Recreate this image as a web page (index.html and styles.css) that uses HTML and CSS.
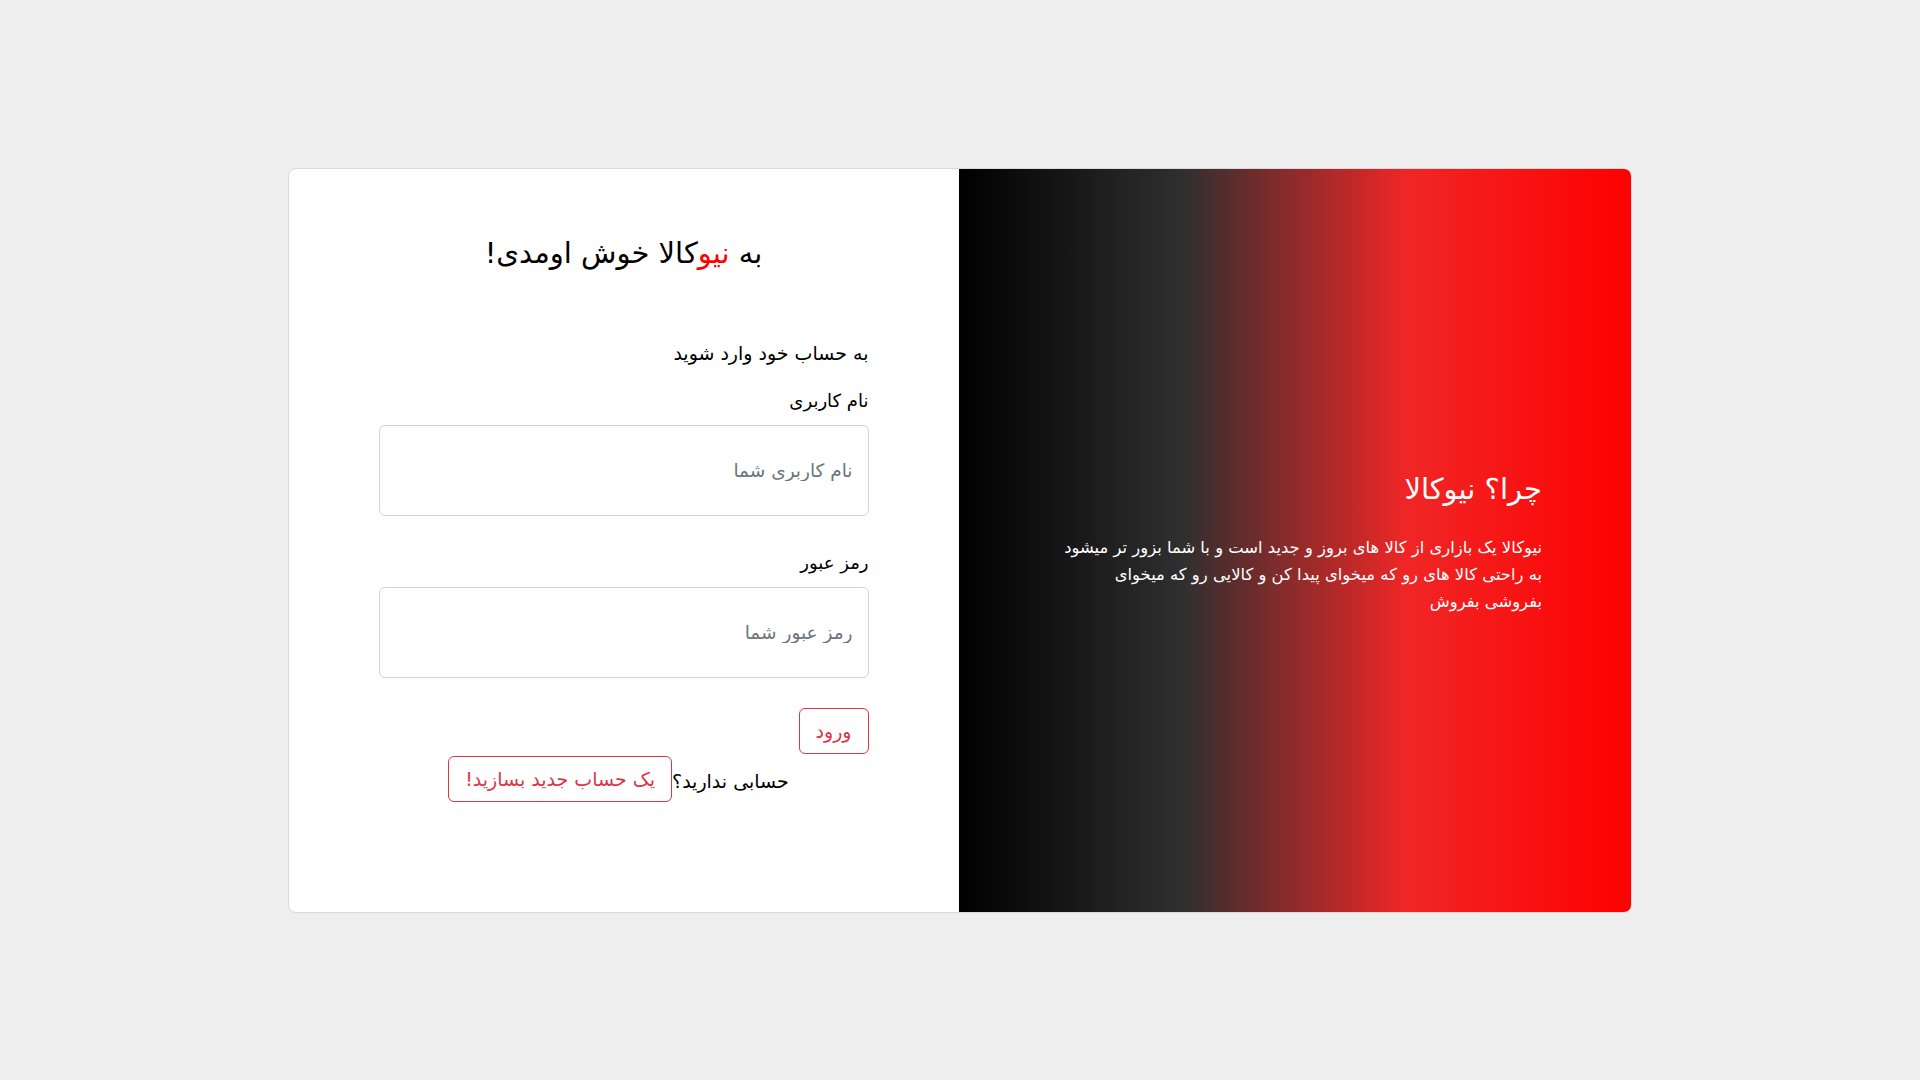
FILE: index.html
```html
<!DOCTYPE html>
<html lang="fa" dir="rtl">
<head>
<meta charset="utf-8">
<title>ورود - نیوکالا</title>
<link rel="stylesheet" href="styles.css">
</head>
<body>
<main class="page">
  <section class="card">
    <div class="promo">
      <div class="promo-text">
        <h3 class="promo-title">چرا؟ نیوکالا</h3>
        <p class="promo-desc">نیوکالا یک بازاری از کالا های بروز و جدید است و با شما بزور تر میشود به راحتی کالا های رو که میخوای پیدا کن و کالایی رو که میخوای بفروشی بفروش</p>
      </div>
    </div>
    <div class="login">
      <h2 class="welcome">به <span class="brand">نیو</span>کالا خوش اومدی!</h2>
      <form class="form">
        <p class="subtitle">به حساب خود وارد شوید</p>
        <label class="label" for="username">نام کاربری</label>
        <input class="input" id="username" type="text" placeholder="نام کاربری شما">
        <label class="label label-gap" for="password">رمز عبور</label>
        <input class="input" id="password" type="password" placeholder="رمز عبور شما">
        <div class="actions">
          <button class="btn" type="button">ورود</button>
        </div>
        <div class="signup">
          <span class="signup-text">حسابی ندارید؟</span><button class="btn" type="button">یک حساب جدید بسازید!</button>
        </div>
      </form>
    </div>
  </section>
</main>
</body>
</html>
```
FILE: styles.css
```css
* { box-sizing: border-box; }
html, body {
  margin: 0;
  padding: 0;
  background: #eeeeee;
  font-family: "DejaVu Sans", "Noto Sans", sans-serif;
  color: #212529;
}
.page {
  width: 1920px;
  height: 1080px;
  display: flex;
  align-items: center;
  justify-content: center;
}
.card {
  width: 1344px;
  height: 745px;
  display: flex;
  flex-direction: row;
  background: #fff;
  border: 1px solid #d9d9d9;
  border-radius: 8px;
  overflow: hidden;
}
.promo {
  flex: 0 0 672px;
  display: flex;
  align-items: center;
  justify-content: flex-start;
  padding: 0 89px 0 0;
  background: linear-gradient(to right, #000 0%, #2f2f2f 33.3%, #f02626 66.7%, #ff0000 100%);
  color: #fff;
}
.promo-text {
  width: 485px;
  padding-top: 6px;
}
.promo-title {
  margin: 0 0 27px 0;
  font-size: 29px;
  font-weight: normal;
  line-height: 35px;
}
.promo-desc {
  margin: 0;
  font-size: 16.4px;
  line-height: 27px;
}
.login {
  flex: 0 0 671px;
  padding-top: 66px;
  display: flex;
  flex-direction: column;
  align-items: center;
}
.welcome {
  margin: 0;
  font-size: 29px;
  line-height: 36px;
  font-weight: normal;
  color: #000;
}
.brand { color: #ff0000; }
.form {
  width: 490px;
  margin-top: 68px;
  display: flex;
  flex-direction: column;
}
.subtitle {
  margin: 0 0 20px 0;
  font-size: 19px;
  line-height: 28px;
  color: #000;
}
.label {
  font-size: 18px;
  line-height: 28px;
  color: #000;
  margin-bottom: 10px;
}
.label-gap { margin-top: 33px; }
.input {
  width: 100%;
  height: 91px;
  padding: 0 15px;
  border: 1px solid #ced4da;
  border-radius: 6px;
  font-family: inherit;
  font-size: 18.5px;
  color: #212529;
  background: #fff;
  direction: rtl;
}
.input::placeholder { color: #6c757d; }
.actions {
  margin-top: 30px;
  display: flex;
  justify-content: flex-start;
}
.btn {
  font-family: inherit;
  font-size: 19px;
  line-height: 28px;
  padding: 8px 16px;
  color: #dc3545;
  background: transparent;
  border: 1px solid #dc3545;
  border-radius: 6px;
}
.signup {
  margin-top: 2px;
  padding-right: 10px;
  display: flex;
  justify-content: center;
  align-items: center;
}
.signup-text {
  font-size: 19px;
  color: #000;
  padding-top: 4px;
}
```
